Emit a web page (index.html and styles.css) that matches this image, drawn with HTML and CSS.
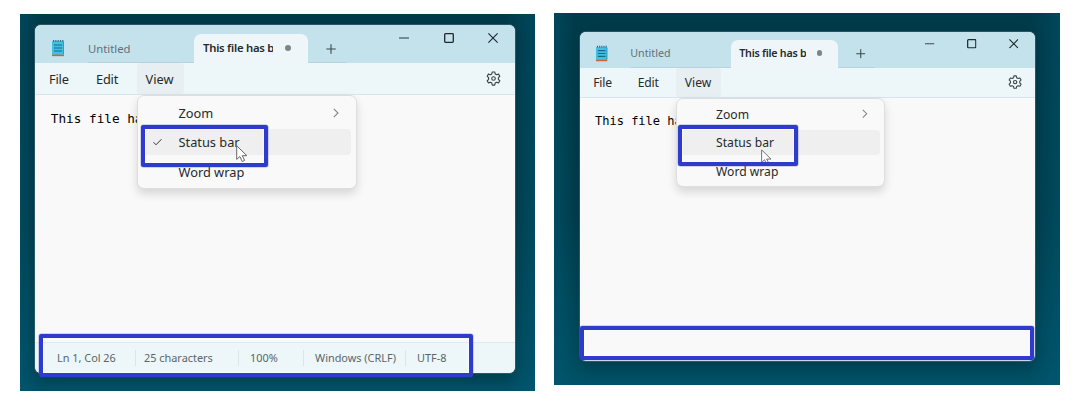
FILE: index.html
```html
<!DOCTYPE html>
<html lang="en">
<head>
<meta charset="utf-8">
<title>Notepad status bar</title>
<link rel="stylesheet" href="styles.css">
</head>
<body>
<svg class="defs" width="0" height="0">
  <symbol id="notepad" viewBox="0 0 14 18">
    <rect x="1" y="2" width="12" height="14" rx="1" fill="#3fc0e4"/>
    <path d="M12.500 3v12" stroke="#2e9cc6" stroke-width="1"/>
    <path d="M2 1.800h10.500" stroke="#2b6a80" stroke-width="1.800" stroke-dasharray="1.200 1.100"/>
    <path d="M3 6h8M3 9h8M3 12h8" stroke="#186b88" stroke-width="1.200"/>
    <path d="M1 16.400h12" stroke="#c8682f" stroke-width="1.500"/>
  </symbol>
  <symbol id="gear" viewBox="0 0 16 16">
    <path d="M6.700 1h2.600l.5 2.100 1.500.9 2.100-.7 1.300 2.300L13.200 7.100v1.800l1.500 1.500-1.300 2.300-2.100-.7-1.500.9-.5 2.100H6.700l-.5-2.100-1.500-.9-2.100.7-1.300-2.300 1.500-1.500V7.100L1.300 5.600l1.300-2.300 2.100.7 1.500-.9z" fill="none" stroke="#3b4347" stroke-width="1.200" stroke-linejoin="round"/>
    <circle cx="8" cy="8" r="1.900" fill="none" stroke="#3b4347" stroke-width="1.200"/>
  </symbol>
  <symbol id="plus" viewBox="0 0 10 10"><path d="M5 .3v9.400M.3 5h9.400" stroke="#3b474c" stroke-width="1.100"/></symbol>
  <symbol id="min" viewBox="0 0 10 10"><path d="M0 5h10" stroke="#3b474c" stroke-width="1.100"/></symbol>
  <symbol id="max" viewBox="0 0 10 10"><rect x=".7" y=".7" width="8.600" height="8.600" rx=".8" fill="none" stroke="#20282b" stroke-width="1.300"/></symbol>
  <symbol id="close" viewBox="0 0 10 10"><path d="M.4.4l9.200 9.200M9.600.4L.4 9.600" stroke="#20282b" stroke-width="1.150"/></symbol>
  <symbol id="chevron" viewBox="0 0 6 10"><path d="M.8.8L5 5 .8 9.200" fill="none" stroke="#858585" stroke-width="1.100"/></symbol>
  <symbol id="check" viewBox="0 0 10 8"><path d="M.6 4.300l2.800 2.800L9.400.9" fill="none" stroke="#333" stroke-width="1.100"/></symbol>
  <symbol id="cursor" viewBox="0 0 12 18"><path d="M.7.800v13.600l3.200-2.900 2.300 5 2.400-1.100-2.300-4.700h4.600z" fill="#fff" stroke="#666" stroke-width="1" stroke-linejoin="round"/></symbol>
</svg>
<main class="board">
  <section class="desktop desktop-left">
    <div class="window">
      <header class="titlebar">
        <svg class="app-icon"><use href="#notepad"/></svg>
        <div class="tab-idle"><span>Untitled</span></div>
        <div class="tab-active"><span class="tab-name">This file has b</span><i class="dot"></i></div>
        <div class="tab-new"><svg class="glyph"><use href="#plus"/></svg></div>
        <div class="controls">
          <svg class="glyph"><use href="#min"/></svg>
          <svg class="glyph"><use href="#max"/></svg>
          <svg class="glyph"><use href="#close"/></svg>
        </div>
      </header>
      <nav class="menubar">
        <span class="m-file">File</span><span class="m-edit">Edit</span><span class="m-view">View</span>
        <svg class="gear"><use href="#gear"/></svg>
      </nav>
      <div class="editor">This file ha</div>
      <footer class="status">
        <span class="s-pos">Ln 1, Col 26</span><span class="s-chars">25 characters</span><span class="s-zoom">100%</span><span class="s-eol">Windows (CRLF)</span><span class="s-enc">UTF-8</span>
      </footer>
      <div class="menu">
        <div class="item"><span class="tick"></span><span class="t-zoom">Zoom</span><svg class="chev"><use href="#chevron"/></svg></div>
        <div class="item selected"><span class="tick"><svg class="check"><use href="#check"/></svg></span><span class="t-status">Status bar</span></div>
        <div class="item"><span class="tick"></span><span class="t-wrap">Word wrap</span></div>
      </div>
    </div>
    <div class="mark mark-item"></div>
    <div class="mark mark-bar"></div>
    <svg class="cursor"><use href="#cursor"/></svg>
  </section>
  <section class="desktop desktop-right">
    <div class="window">
      <header class="titlebar">
        <svg class="app-icon"><use href="#notepad"/></svg>
        <div class="tab-idle"><span>Untitled</span></div>
        <div class="tab-active"><span class="tab-name">This file has b</span><i class="dot"></i></div>
        <div class="tab-new"><svg class="glyph"><use href="#plus"/></svg></div>
        <div class="controls">
          <svg class="glyph"><use href="#min"/></svg>
          <svg class="glyph"><use href="#max"/></svg>
          <svg class="glyph"><use href="#close"/></svg>
        </div>
      </header>
      <nav class="menubar">
        <span class="m-file">File</span><span class="m-edit">Edit</span><span class="m-view">View</span>
        <svg class="gear"><use href="#gear"/></svg>
      </nav>
      <div class="editor">This file ha</div>
      <div class="menu">
        <div class="item"><span class="tick"></span><span class="t-zoom">Zoom</span><svg class="chev"><use href="#chevron"/></svg></div>
        <div class="item selected"><span class="tick"></span><span class="t-status">Status bar</span></div>
        <div class="item"><span class="tick"></span><span class="t-wrap">Word wrap</span></div>
      </div>
    </div>
    <div class="mark mark-item"></div>
    <div class="mark mark-bar"></div>
    <svg class="cursor"><use href="#cursor"/></svg>
  </section>
</main>
</body>
</html>
```
FILE: styles.css
```css
* { box-sizing: border-box; }
body { margin: 0; background: #fff; font-family: "Noto Sans", "Open Sans", sans-serif; color: #252a2c; }
.defs { position: absolute; }
svg { display: block; flex: none; overflow: visible; }
.board { display: flex; align-items: flex-start; gap: 19px; width: 1080px; height: 409px; padding: 13px 20px; overflow: hidden; }
.desktop { position: relative; flex: none; overflow: hidden; background: linear-gradient(90deg, #00587500 94%, #00587566), linear-gradient(270deg, #00587500 96%, #00587566), linear-gradient(#003b4a, #00404f 55%, #005368); }

.desktop-left {
  --s: 1; --title: 38px; --bar: 32px; --tab-top: 9px; --menu-top: 70px; --row-gap: 3.500px;
  width: 515px; height: 377px; margin-top: 1px; padding: 11px 20px 18px 15px;
}
.desktop-right {
  --s: .948; --title: 36.500px; --bar: 29.500px; --tab-top: 8.500px; --menu-top: 66px; --row-gap: 3.800px;
  width: 506px; height: 372px; padding: 18.500px 25px 24px 26px;
}
.window { position: relative; display: flex; flex-direction: column; height: 100%; border-radius: 6px; background: #f9f9f9; box-shadow: 0 0 0 1px #49717c88, 0 8px 16px #00202a66; }
.titlebar { display: flex; flex: none; height: var(--title); background: #c4e2ec; border-radius: 6px 6px 0 0; }
.app-icon { width: calc(14px * var(--s)); height: calc(18px * var(--s)); margin: calc(14px * var(--s)) calc(23px * var(--s)) 0 calc(16px * var(--s)); }
.tab-idle { width: calc(106px * var(--s)); padding: calc(14.500px * var(--s)) 0 0 0; color: #617178; font-size: calc(11.300px * var(--s)); line-height: calc(17px * var(--s)); white-space: nowrap; box-shadow: inset 0 -1px #b5d4df; }
.tab-active { position: relative; display: flex; align-items: center; width: calc(113.500px * var(--s)); margin-top: var(--tab-top); padding: 0 calc(17px * var(--s)) 2px calc(9px * var(--s)); background: #eef6f9; border-radius: 7px 7px 0 0; font-size: calc(11.300px * var(--s)); font-weight: 600; }
.tab-name { width: calc(70px * var(--s)); overflow: hidden; white-space: nowrap; letter-spacing: -.25px; }
.dot { width: calc(6px * var(--s)); height: calc(6px * var(--s)); margin-left: auto; border-radius: 50%; background: #7d8487; }
.tab-new { width: calc(39px * var(--s)); padding: calc(18.500px * var(--s)) 0 0 calc(18px * var(--s)); box-shadow: inset 0 -1px #b5d4df; }
.desktop-right .tab-new { padding-left: 18px; }
.glyph { width: calc(10px * var(--s)); height: calc(10px * var(--s)); }
.controls { display: flex; gap: calc(34.500px * var(--s)); margin-left: auto; padding: calc(8px * var(--s)) calc(17px * var(--s)) 0 0; }
.menubar { display: flex; flex: none; align-items: center; height: var(--bar); background: #edf6f9; border-bottom: 1px solid #d5e7ec; font-size: calc(12.800px * var(--s)); line-height: calc(18px * var(--s)); letter-spacing: -.2px; }
.m-file { width: calc(47px * var(--s)); margin-left: calc(14px * var(--s)); }
.m-edit { width: calc(40.500px * var(--s)); }
.m-view { align-self: stretch; display: flex; align-items: center; width: calc(47.500px * var(--s)); padding-left: calc(9px * var(--s)); border-radius: 4px; background: #e8eff2; letter-spacing: 0; }
.gear { width: calc(15px * var(--s)); height: calc(15px * var(--s)); margin: 0 calc(14px * var(--s)) 0 auto; }
.editor { flex: 1; padding: calc(15px * var(--s)) calc(15.800px * var(--s)); color: #000; font: calc(12.700px * var(--s))/calc(18px * var(--s)) "DejaVu Sans Mono", monospace; }
.desktop-right .editor { padding-top: 15px; }
.status { display: flex; align-items: center; height: 31px; padding-left: 22px; border-top: 1px solid #dfe9ec; border-radius: 0 0 6px 6px; background: #edf6f9; color: #5b6568; font-size: 10.900px; line-height: 16px; letter-spacing: 0; white-space: nowrap; }
.status span { border-right: 1px solid #dbe4e7; margin-right: 8px; }
.status .s-pos { width: 79px; }
.status .s-chars { width: 95px; margin-right: 11px; }
.status .s-zoom { width: 54px; margin-right: 11px; }
.status .s-eol { width: 91px; margin-right: 11px; }
.status .s-enc { border: 0; }

.menu { position: absolute; left: calc(101.500px * var(--s)); top: var(--menu-top); width: calc(220px * var(--s)); height: calc(94px * var(--s)); padding: calc(3.500px * var(--s)) calc(4.500px * var(--s)); border: 1px solid #dcdedf; border-radius: 7px; background: #f9f9f9; box-shadow: 0 5px 10px #00000024; font-size: calc(12.800px * var(--s)); white-space: nowrap; }
.item { display: flex; align-items: center; height: calc(26px * var(--s)); margin-bottom: var(--row-gap); border-radius: 4px; }
.selected { background: #efefef; }
.tick { display: flex; width: calc(36.500px * var(--s)); padding-left: calc(11px * var(--s)); }
.check { width: 9px; height: 8px; }
.chev { width: calc(6px * var(--s)); height: calc(10px * var(--s)); margin: 0 calc(12px * var(--s)) 0 auto; }
.mark { position: absolute; border: 4px solid #2e3bcd; border-radius: 2px; box-shadow: 0 0 0 .5px #2e3bcd66, inset 0 0 0 .5px #ffffff; }
.desktop-left .mark-item { left: 121px; top: 111px; width: 127px; height: 42px; }
.desktop-left .mark-bar { left: 19px; top: 320px; width: 434px; height: 43px; }
.desktop-right .mark-item { left: 124px; top: 112px; width: 120px; height: 41px; }
.desktop-right .mark-bar { left: 26px; top: 313px; width: 454px; height: 34px; }
.cursor { position: absolute; width: 12px; height: 18px; left: 216px; top: 131px; }
.desktop-right .cursor { left: 207px; top: 136px; width: 11px; height: 17px; clip-path: inset(0 0 4px 0); }
```
